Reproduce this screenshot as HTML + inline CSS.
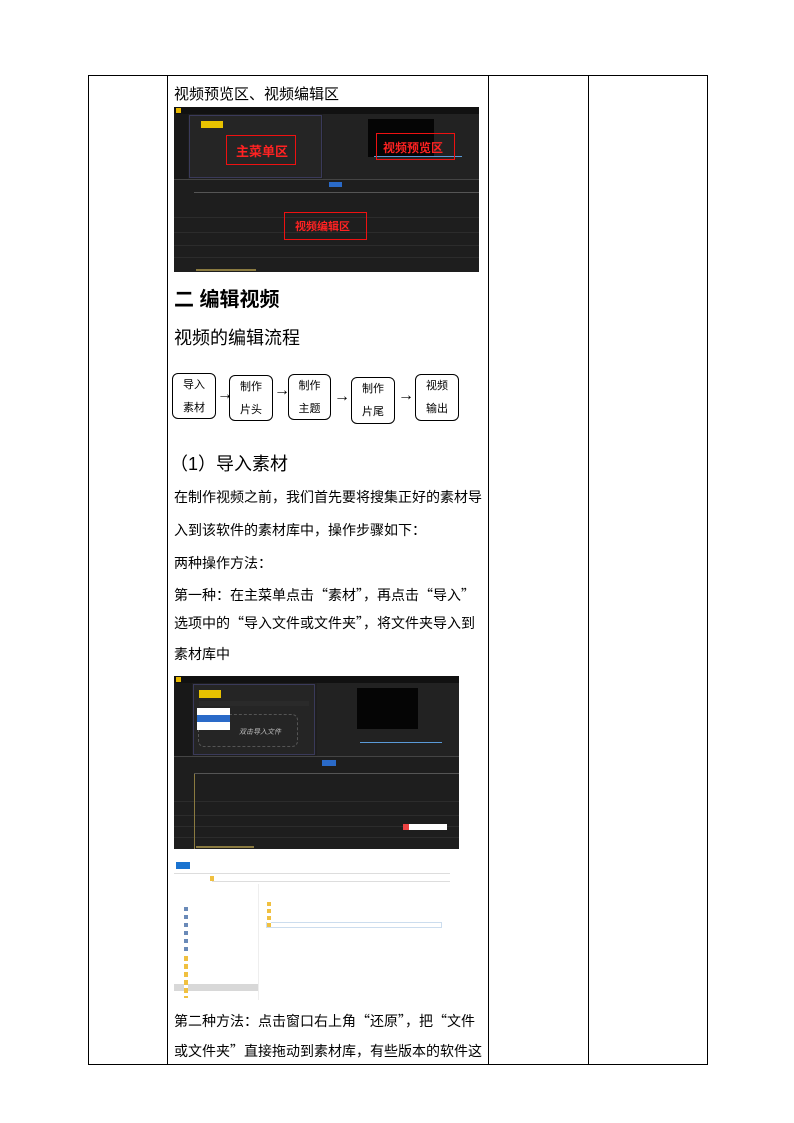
<!DOCTYPE html>
<html><head><meta charset="utf-8"><style>
*{margin:0;padding:0;box-sizing:border-box}
body{width:794px;height:1123px;background:#fff;position:relative;overflow:hidden;font-family:"Liberation Sans","Noto Sans CJK SC",sans-serif;color:#000}
.a{position:absolute}
.l{position:absolute;background:#000}
.t{position:absolute;white-space:nowrap;font-size:14px}
.q{font-family:"Noto Sans CJK SC",sans-serif}
.box{position:absolute;border:1px solid #000;border-radius:6px;font-size:11px;text-align:center;line-height:23px;padding-top:0}
.arr{position:absolute;font-size:16px}
.ed{position:absolute;background:#1e1e1e;overflow:hidden}
.ed div{position:absolute}
</style></head><body>
<div class="l" style="left:88px;top:75px;width:620px;height:1px"></div>
<div class="l" style="left:88px;top:1064px;width:620px;height:1px"></div>
<div class="l" style="left:88px;top:75px;width:1px;height:990px"></div>
<div class="l" style="left:167px;top:75px;width:1px;height:990px"></div>
<div class="l" style="left:488px;top:75px;width:1px;height:990px"></div>
<div class="l" style="left:588px;top:75px;width:1px;height:990px"></div>
<div class="l" style="left:707px;top:75px;width:1px;height:990px"></div>

<div class="t" style="left:174px;top:83px;font-size:15px">视频预览区、视频编辑区</div>

<div class="ed" style="left:174px;top:107px;width:305px;height:165px">
 <div style="left:0;top:0;width:305px;height:7px;background:#111"></div>
 <div style="left:2px;top:1px;width:5px;height:5px;background:#e8b800"></div>
 <div style="left:0;top:7px;width:14px;height:65px;background:#181818"></div>
 <div style="left:15px;top:8px;width:133px;height:63px;background:#252525;border:1px solid #3a3a5a"></div>
 <div style="left:27px;top:14px;width:22px;height:7px;background:#e8c200"></div>
 <div style="left:149px;top:7px;width:156px;height:65px;background:#222"></div>
 <div style="left:194px;top:12px;width:66px;height:38px;background:#050505"></div>
 <div style="left:200px;top:49px;width:88px;height:1px;background:#5a9ad8"></div>
 <div style="left:52px;top:28px;width:70px;height:30px;border:1.5px solid #e11"></div>
 <div style="left:62px;top:34px;color:#f22;font-size:13px;font-weight:bold">主菜单区</div>
 <div style="left:202px;top:26px;width:79px;height:27px;border:1.5px solid #e11"></div>
 <div style="left:209px;top:32px;color:#f22;font-size:12px;font-weight:bold">视频预览区</div>
 <div style="left:0;top:72px;width:305px;height:1px;background:#444"></div>
 <div style="left:155px;top:75px;width:13px;height:5px;background:#2a6ac8"></div>
 <div style="left:20px;top:85px;width:285px;height:1px;background:#555"></div>
 <div style="left:0;top:110px;width:305px;height:1px;background:#2c2c2c"></div>
 <div style="left:0;top:125px;width:305px;height:1px;background:#2c2c2c"></div>
 <div style="left:0;top:138px;width:305px;height:1px;background:#2c2c2c"></div>
 <div style="left:0;top:150px;width:305px;height:1px;background:#2c2c2c"></div>
 <div style="left:110px;top:105px;width:83px;height:28px;border:1.5px solid #e11"></div>
 <div style="left:121px;top:111px;color:#f22;font-size:11px;font-weight:bold">视频编辑区</div>
 <div style="left:22px;top:162px;width:60px;height:2px;background:#8a7a40"></div>
</div>

<div class="t" style="left:174px;top:283px;font-size:20px;font-weight:bold">二 编辑视频</div>
<div class="t" style="left:174px;top:324px;font-size:18px">视频的编辑流程</div>

<div class="box" style="left:172px;top:373px;width:44px;height:46px">导入<br>素材</div>
<div class="arr" style="left:217px;top:386px">→</div>
<div class="box" style="left:229px;top:375px;width:44px;height:46px">制作<br>片头</div>
<div class="arr" style="left:274px;top:382px">→</div>
<div class="box" style="left:288px;top:374px;width:43px;height:46px">制作<br>主题</div>
<div class="arr" style="left:334px;top:388px">→</div>
<div class="box" style="left:351px;top:377px;width:44px;height:47px">制作<br>片尾</div>
<div class="arr" style="left:398px;top:387px">→</div>
<div class="box" style="left:415px;top:374px;width:44px;height:47px">视频<br>输出</div>

<div class="t" style="left:170px;top:450px;font-size:18px"><span class="q">（</span>1<span class="q">）</span>导入素材</div>
<div class="t" style="left:174px;top:487px">在制作视频之前<span class="q">，</span>我们首先要将搜集正好的素材导</div>
<div class="t" style="left:174px;top:520px">入到该软件的素材库中<span class="q">，</span>操作步骤如下<span class="q">：</span></div>
<div class="t" style="left:174px;top:553px">两种操作方法<span class="q">：</span></div>
<div class="t" style="left:174px;top:585px">第一种<span class="q">：</span>在主菜单点击<span class="q">“</span>素材<span class="q">”，</span>再点击<span class="q">“</span>导入<span class="q">”</span></div>
<div class="t" style="left:174px;top:613px">选项中的<span class="q">“</span>导入文件或文件夹<span class="q">”，</span>将文件夹导入到</div>
<div class="t" style="left:174px;top:644px">素材库中</div>

<div class="ed" style="left:174px;top:676px;width:285px;height:173px">
 <div style="left:0;top:0;width:285px;height:7px;background:#111"></div>
 <div style="left:2px;top:1px;width:5px;height:5px;background:#e8b800"></div>
 <div style="left:0;top:7px;width:18px;height:73px;background:#181818"></div>
 <div style="left:19px;top:8px;width:122px;height:71px;background:#252525;border:1px solid #3a3a5a"></div>
 <div style="left:25px;top:14px;width:22px;height:8px;background:#e8c200"></div>
 <div style="left:25px;top:25px;width:110px;height:5px;background:#2a2a2a"></div>
 <div style="left:24px;top:38px;width:100px;height:33px;border:1px dashed #555;border-radius:6px"></div>
 <div style="left:65px;top:51px;color:#bbb;font-size:7px;font-style:italic">双击导入文件</div>
 <div style="left:23px;top:32px;width:33px;height:22px;background:#fff"></div>
 <div style="left:23px;top:39px;width:33px;height:7px;background:#2a6ac8"></div>
 <div style="left:143px;top:7px;width:142px;height:73px;background:#222"></div>
 <div style="left:183px;top:12px;width:61px;height:41px;background:#050505"></div>
 <div style="left:186px;top:66px;width:82px;height:1px;background:#5a9ad8"></div>
 <div style="left:0;top:80px;width:285px;height:1px;background:#444"></div>
 <div style="left:148px;top:84px;width:14px;height:6px;background:#2a6ac8"></div>
 <div style="left:20px;top:97px;width:265px;height:1px;background:#555"></div>
 <div style="left:0;top:125px;width:285px;height:1px;background:#2c2c2c"></div>
 <div style="left:0;top:139px;width:285px;height:1px;background:#2c2c2c"></div>
 <div style="left:0;top:150px;width:285px;height:1px;background:#2c2c2c"></div>
 <div style="left:0;top:161px;width:285px;height:1px;background:#2c2c2c"></div>
 <div style="left:20px;top:98px;width:1px;height:75px;background:#8a7a40"></div>
 <div style="left:229px;top:148px;width:44px;height:6px;background:#fff"></div>
 <div style="left:229px;top:148px;width:6px;height:6px;background:#e44"></div>
 <div style="left:22px;top:170px;width:58px;height:2px;background:#8a7a40"></div>
</div>

<div class="a" style="left:174px;top:860px;width:276px;height:140px;background:#fff;font-size:4px;color:#555">
 <div class="a" style="left:2px;top:2px;width:14px;height:7px;background:#1a73d0"></div>
 <div class="a" style="left:0;top:13px;width:276px;height:1px;background:#ddd"></div>
 <div class="a" style="left:36px;top:16px;width:4px;height:5px;background:#f0c040"></div>
 <div class="a" style="left:38px;top:16px;width:238px;height:6px;border-bottom:1px solid #ddd"></div>
 <div class="a" style="left:84px;top:24px;width:1px;height:116px;background:#eee"></div>
 <div class="a" style="left:92px;top:62px;width:176px;height:6px;border:1px solid #cde"></div>
 <div class="a" style="left:0;top:124px;width:84px;height:7px;background:#d8d8d8"></div>
 <div class="a" style="left:93px;top:42px;width:4px;height:25px;background:repeating-linear-gradient(#f0c040 0 4px,#fff 4px 7px)"></div>
 <div class="a" style="left:10px;top:96px;width:4px;height:42px;background:repeating-linear-gradient(#f0c040 0 5px,#fff 5px 8px)"></div>
 <div class="a" style="left:10px;top:47px;width:4px;height:45px;background:repeating-linear-gradient(#6a8ab8 0 4px,#fff 4px 8px)"></div>
</div>

<div class="t" style="left:174px;top:1011px">第二种方法<span class="q">：</span>点击窗口右上角<span class="q">“</span>还原<span class="q">”，</span>把<span class="q">“</span>文件</div>
<div class="t" style="left:174px;top:1041px">或文件夹<span class="q">”</span>直接拖动到素材库<span class="q">，</span>有些版本的软件这</div>
</body></html>
